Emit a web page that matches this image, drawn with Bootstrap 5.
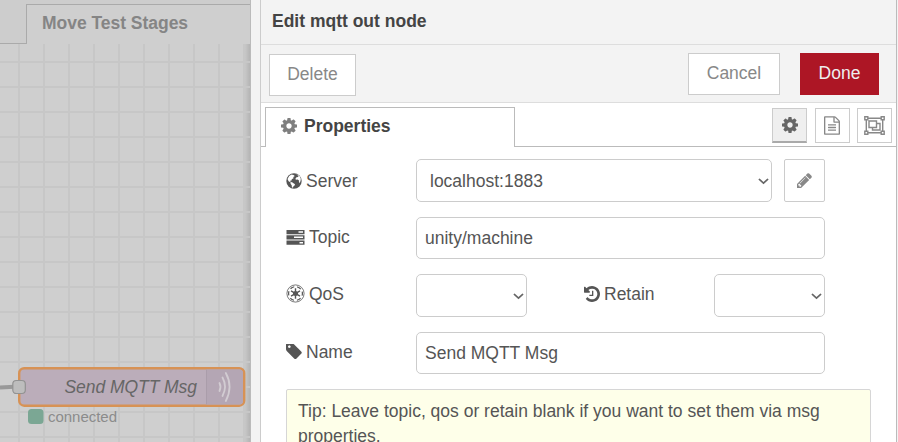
<!DOCTYPE html>
<html lang="en">
<head>
<meta charset="utf-8">
<meta name="viewport" content="width=device-width, initial-scale=1">
<title>Edit mqtt out node</title>
<link href="https://cdn.jsdelivr.net/npm/bootstrap@5.3.0/dist/css/bootstrap.min.css" rel="stylesheet">
<style>
body{font-family:"Liberation Sans",Arial,sans-serif;font-size:17.5px;line-height:26px;color:#555;background:#f3f3f3}
svg{display:block;flex:none}
.app{height:442px}
.workspace{width:250px;background:#cfcfcf}
.flow-tabs{height:44px}
.tab-rest{width:26px;background:#cdcdcd;border-bottom:1px solid #aaa}
.tab-top{height:4px;background:#cdcdcd}
.tab-current{border:solid #aaa;border-width:1px 0 0 1px;color:#858585;padding:5px 0 0 15px;letter-spacing:-.03px}
.canvas-area{background:linear-gradient(to left,rgba(0,0,0,.13),transparent 7px)}
.edge{width:11px;border-left:1px solid #bbb;border-right:1px solid #ccc;background:#f3f3f3}
.tray{width:636px;background:#fff;border-right:1px solid #bbb}
.tray-title{height:45px;background:#f3f3f3;border-bottom:1px solid #ddd;color:#444;padding:8px 0 0 11px;font-weight:bold}
.tray-tools{height:58px;background:#f3f3f3;border-bottom:1px solid #ddd;padding:8px 17px 0 8px}
.tool{height:42px;border:1px solid #ccc;border-radius:0;background:#fff;color:#888;font-size:17.5px;line-height:26px;padding:6px 0 8px}
.tool-delete{width:87px;margin-top:1px}
.tool-cancel{width:92px;margin-right:20px}
.tool-done{width:79px;background:#ad1625;border-color:#ad1625;color:#eee}
.tray-tabs{height:44px;border-bottom:1px solid #bbb;padding:4px 4px 0}
.tab-props{width:250px;height:40px;border:1px solid #bbb;border-bottom:0;background:#fff;color:#444;font-weight:bold;padding:0 0 3px 15px;margin-bottom:-1px;gap:7px}
.mini{width:35px;height:35px;border:1px solid #ccc;background:#fff;color:#888;margin-top:1px}
.mini.on{background:#efefef;border-bottom:2px solid #aaa;color:#666}
.mini-set{gap:7.5px}
.sheet{padding:12px 25px 0}
.line{width:539px;height:43px;margin-bottom:15px}
.line-text{height:42px}
.lbl{width:130px}
.line-text .lbl{padding-bottom:2px}
.line-qos .lbl{padding-bottom:4px}
.form-control.fld,.form-select.fld{border:1px solid #ccc;border-radius:5px;color:#555;font-size:17.5px;line-height:26px;height:100%;padding:0 8px;box-shadow:none}
.form-select.fld{padding-left:13px;background-size:10.5px 10.5px;background-position:right 3px top 16px;background-image:url("data:image/svg+xml,%3csvg xmlns='http://www.w3.org/2000/svg' viewBox='0 0 16 16'%3e%3cpath fill='none' stroke='%23666' stroke-linecap='round' stroke-width='2.4' d='m2 5 6 5.500 6-5.500'/%3e%3c/svg%3e")}
.w-server{width:356px!important}
.w-small{width:111px!important}
.pen{width:41px;border:1px solid #ccc;border-radius:2px;color:#888;background:#fff}
.tip{width:585px;height:75px;background:#feffe9;border:1px solid #d6d6d6;border-radius:2px;padding:9px 11px;line-height:25px}
</style>
<script src="https://cdn.jsdelivr.net/npm/bootstrap@5.3.0/dist/js/bootstrap.bundle.min.js"></script>
</head>
<body class="overflow-hidden">
<div class="app d-flex overflow-hidden">
  <div class="workspace d-flex flex-column flex-shrink-0">
    <div class="flow-tabs d-flex">
      <div class="tab-rest"></div>
      <div class="flex-grow-1 d-flex flex-column">
        <div class="tab-top"></div>
        <div class="tab-current fw-bold flex-grow-1">Move Test Stages</div>
      </div>
    </div>
    <div class="canvas-area flex-grow-1">
      <svg width="250" height="398" viewBox="0 44 250 398" font-family="Liberation Sans,Arial,sans-serif">
        <defs>
          <pattern id="grid" x="18" y="11" width="25" height="25" patternUnits="userSpaceOnUse"><path d="M1 0v25M0 1h25" stroke="#c7c7c7" stroke-width="2"/></pattern>
        </defs>
        <rect y="44" width="250" height="398" fill="url(#grid)"/>
        <path d="M0 387.500L19 386.500" stroke="#999" stroke-width="4"/>
        <rect x="19.200" y="368.200" width="225" height="37.500" rx="5" fill="#bbadba" stroke="#d79255" stroke-width="2.400"/>
        <path d="M206.500 369.500h33q3.500 0 3.500 4v27q0 4-3.500 4h-33z" fill="#b4a6b4"/>
        <path d="M206.500 369.500v35" stroke="#aa9daa" stroke-width="1"/>
        <g fill="none" stroke="#d2ccd2" stroke-width="1.800" stroke-linecap="round"><path d="M219.500 383q2 4 0 8"/><path d="M222.500 377.500q5 9 0 18.500"/><path d="M225.800 373q7.500 13.500 0 28"/></g>
        <rect x="12.800" y="380.500" width="12.500" height="13" rx="3.500" fill="#bdbdbd" stroke="#929292" stroke-width="1.200"/>
        <text x="64.500" y="393" font-size="17.500" font-style="italic" fill="#666" textLength="132.500">Send MQTT Msg</text>
        <rect x="28" y="409" width="15.500" height="15" rx="3.500" fill="#7ba794"/>
        <text x="48" y="422" font-size="15" fill="#8b8b8b" textLength="69">connected</text>
      </svg>
    </div>
  </div>
  <div class="edge flex-shrink-0"></div>
  <div class="tray flex-shrink-0 overflow-hidden">
    <div class="tray-title">Edit mqtt out node</div>
    <div class="tray-tools d-flex align-items-start">
      <button class="btn tool tool-delete me-auto">Delete</button>
      <button class="btn tool tool-cancel">Cancel</button>
      <button class="btn tool tool-done">Done</button>
    </div>
    <div class="tray-tabs d-flex align-items-start">
      <div class="tab-props d-flex align-items-center me-auto">
        <svg width="16" height="16" viewBox="128 128 1536 1536" fill="#7f7f7f"><path id="gear" d="M1152 896q0-106-75-181t-181-75-181 75-75 181 75 181 181 75 181-75 75-181zm512-109v222q0 12-8 23t-20 13l-185 28q-19 54-39 91 35 50 107 138 10 12 10 25t-9 23q-27 37-99 108t-94 71q-12 0-26-9l-138-108q-44 23-91 38-16 136-29 186-7 28-36 28h-222q-14 0-24.500-8.500t-11.500-21.500l-28-184q-49-16-90-37l-141 107q-10 9-25 9-14 0-25-11-126-114-165-168-7-10-7-23 0-12 8-23 15-21 51-66.500t54-70.500q-27-50-41-99l-183-27q-13-2-21-12.500t-8-23.500v-222q0-12 8-23t19-13l186-28q14-46 39-92-40-57-107-138-10-12-10-24 0-10 9-23 26-36 98.500-107.500t94.500-71.500q13 0 26 10l138 107q44-23 91-38 16-136 29-186 7-28 36-28h222q14 0 24.500 8.500t11.500 21.500l28 184q49 16 90 37l142-107q9-9 24-9 13 0 25 10 129 119 165 170 7 8 7 22 0 12-8 23-15 21-51 66.500t-54 70.500q26 50 41 98l183 28q13 2 21 12.500t8 23.500z"/></svg>
        <span>Properties</span>
      </div>
      <div class="mini-set d-flex">
        <div class="mini on d-flex align-items-center justify-content-center"><svg width="16" height="16" viewBox="128 128 1536 1536" fill="currentColor"><use href="#gear"/></svg></div>
        <div class="mini d-flex align-items-center justify-content-center"><svg width="16" height="19" viewBox="128 0 1536 1792" fill="currentColor"><path d="M1596 380q28 28 48 76t20 88v1152q0 40-28 68t-68 28h-1344q-40 0-68-28t-28-68v-1600q0-40 28-68t68-28h896q40 0 88 20t76 48zm-444-244v376h376q-10-29-22-41l-313-313q-12-12-41-22zm384 1528v-1024h-416q-40 0-68-28t-28-68v-416h-768v1536h1280zm-1024-864q0-14 9-23t23-9h704q14 0 23 9t9 23v64q0 14-9 23t-23 9h-704q-14 0-23-9t-9-23v-64zm736 224q14 0 23 9t9 23v64q0 14-9 23t-23 9h-704q-14 0-23-9t-9-23v-64q0-14 9-23t23-9h704zm0 256q14 0 23 9t9 23v64q0 14-9 23t-23 9h-704q-14 0-23-9t-9-23v-64q0-14 9-23t23-9h704z"/></svg></div>
        <div class="mini d-flex align-items-center justify-content-center"><svg width="21" height="19" viewBox="0 0 21 19" fill="none" stroke="currentColor" stroke-width="1.400"><path d="M4 2.300h13M4 16.700h13M2.300 4v11M18.700 4v11"/><path d="M.8.800h3v3h-3zM17.200.800h3v3h-3zM.8 15.200h3v3h-3zM17.200 15.200h3v3h-3zM5 5h7.500v6.500H5z"/><path d="M12.500 7.500H16V14H8.500v-2.500"/></svg></div>
      </div>
    </div>
    <div class="sheet">
      <div class="line d-flex">
        <div class="lbl d-flex align-items-center"><svg class="me-1" width="16" height="16" viewBox="0 0 16 16"><circle cx="8" cy="8" r="7.700" fill="#555"/><path d="M3.200 2.900L5.500 1.600l2 .3 1.300 1.200-1.500.9.2 1.300-1.700.9-.3 1.300-1.400.2.500 1.200 1.500.3 1.400 1 1.500 1-.4 1.300-1.100.8-.6 1.500-1-.5-.2-2-1.200-1.600.2-1.300L2.600 8.200 1.500 6.100zM10 1.500l2.600 1.300-.5 1.200-1.600.2-1 1.300.3 1.300 1.800-.2 1.400.9-.1 1.300.8 1.500.9-2.600.2-2-.9-2.100-1.500-1.500z" fill="#fff"/></svg><span>Server</span></div>
        <select class="form-select fld w-server" aria-label="Server"><option>localhost:1883</option></select>
        <button class="btn pen p-0 ms-auto d-flex align-items-center justify-content-center"><svg width="15" height="15" viewBox="128 128 1536 1536" fill="currentColor"><path d="M491 1536l91-91-235-235-91 91v107h128v128h107zm523-928q0-22-22-22-10 0-17 7l-542 542q-7 7-7 17 0 22 22 22 10 0 17-7l542-542q7-7 7-17zm-54-192l416 416-832 832h-416v-416zm683 96q0 53-37 90l-166 166-416-416 166-165q36-38 90-38 53 0 91 38l235 234q37 39 37 91z"/></svg></button>
      </div>
      <div class="line line-text d-flex">
        <div class="lbl d-flex align-items-center"><svg class="me-1" width="19" height="15" viewBox="0 0 19 15"><path d="M.5 0h18v4.200H.5zM.5 5.300h18v4.200H.5zM.5 10.600h18v4.200H.5z" fill="#555"/><path d="M12.500 1.300H17v1.500h-4.500zM8 6.600h9v1.500H8zM13.500 11.900H17v1.500h-3.500z" fill="#fff"/></svg><span>Topic</span></div>
        <input class="form-control fld flex-fill w-auto" aria-label="Topic" value="unity/machine">
      </div>
      <div class="line line-qos d-flex">
        <div class="lbl d-flex align-items-center"><svg class="me-1" width="19" height="19" viewBox="-9.500 -9.500 19 19" fill="none" stroke="#555"><circle r="8.600" stroke-width=".8"/><circle r="6.900" stroke-width="1.200" stroke-dasharray="4.200 3.025" stroke-dashoffset="2.100"/><circle r="2.500" fill="#555" stroke="none"/><path d="M0-5.200V5.200M-4.500-2.600L4.500 2.600M4.500-2.600L-4.500 2.600" stroke-width="1.400"/></svg><span>QoS</span></div>
        <select class="form-select fld w-small" aria-label="QoS"><option></option></select>
        <div class="lbl d-flex align-items-center ms-auto"><svg class="me-1" width="16" height="16" viewBox="128 128 1536 1536" fill="#555"><path d="M1664 896q0 156-61 298t-164 245-245 164-298 61q-172 0-327-72.500t-264-204.500q-7-10-6.500-22.500t8.500-20.500l137-138q10-9 25-9 16 2 23 12 73 95 179 147t225 52q104 0 198.500-40.500t163.500-109.500 109.500-163.500 40.500-198.500-40.500-198.500-109.500-163.500-163.500-109.500-198.500-40.500q-98 0-188 35.500t-160 101.500l137 138q31 30 14 69-17 40-59 40h-448q-26 0-45-19t-19-45v-448q0-42 40-59 39-17 69 14l130 129q107-101 244.500-156.500t284.500-55.500q156 0 298 61t245 164 164 245 61 298zm-640-288v448q0 14-9 23t-23 9h-320q-14 0-23-9t-9-23v-64q0-14 9-23t23-9h224v-352q0-14 9-23t23-9h64q14 0 23 9t9 23z"/></svg><span>Retain</span></div>
        <select class="form-select fld w-small" aria-label="Retain"><option></option></select>
      </div>
      <div class="line line-text d-flex">
        <div class="lbl d-flex align-items-center"><svg class="me-1" width="16" height="16" viewBox="128 192 1536 1536" fill="#555"><path d="M576 448q0-53-37.500-90.500t-90.500-37.500-90.500 37.500-37.500 90.500 37.500 90.500 90.500 37.500 90.500-37.500 37.500-90.500zm1067 576q0 53-37 90l-491 492q-39 37-91 37-53 0-90-37l-715-716q-38-37-64.500-101t-26.500-117v-416q0-52 38-90t90-38h416q53 0 117 26.500t102 64.500l715 714q37 39 37 91z"/></svg><span>Name</span></div>
        <input class="form-control fld flex-fill w-auto" aria-label="Name" value="Send MQTT Msg">
      </div>
      <div class="tip">Tip: Leave topic, qos or retain blank if you want to set them via msg properties.</div>
    </div>
  </div>
</div>
</body>
</html>
